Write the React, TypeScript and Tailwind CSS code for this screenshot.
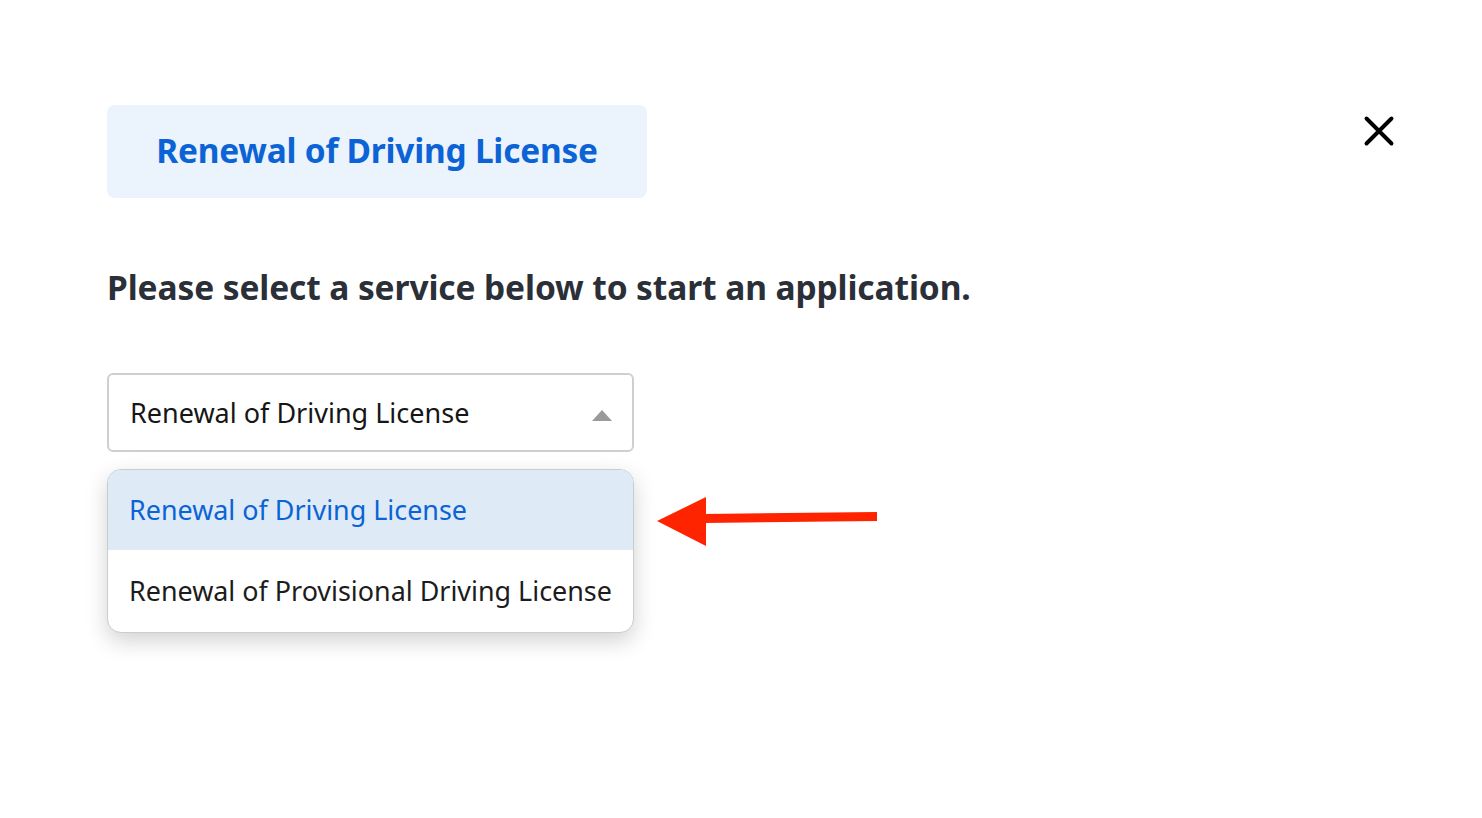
const font = { fontFamily: "'Noto Sans', Lato, 'Liberation Sans', sans-serif" };

export default function App() {
  return (
    <div className="relative min-h-[818px] w-full bg-white text-[#2b2f38]" style={font}>
      <div className="flex items-start justify-between pl-[107px] pr-[87px] pt-[105px]">
        <div className="flex h-[93px] w-[540px] items-center justify-center rounded-lg bg-[#ebf3fc] pb-[4px]">
          <h1 className="text-[33.4px] leading-[40px] font-bold tracking-[-0.2px] text-[#0b63d5]">
            Renewal of Driving License
          </h1>
        </div>
        <button className="mt-[10px] text-black" aria-label="Close">
          <svg width="32" height="32" viewBox="0 0 32 32" fill="none" stroke="currentColor" strokeWidth="3.9" strokeLinecap="round">
            <path d="M3.5 3.5L28.5 28.5M28.5 3.5L3.5 28.5" />
          </svg>
        </button>
      </div>

      <div className="pl-[107px]">
        <p className="mt-[69px] text-[33.5px] leading-[40px] font-bold tracking-[-0.1px] text-[#2b2f38]">
          Please select a service below to start an application.
        </p>

        <div className="mt-[66px] w-[527px]">
          <div className="flex h-[79px] items-center justify-between rounded-md border-2 border-[#cfcfcf] pl-[21px] pr-[20px]">
            <span className="text-[27px] leading-[36px] text-[#161616]">Renewal of Driving License</span>
            <span className="mt-[6px] h-0 w-0 border-x-[10px] border-b-[11px] border-x-transparent border-b-[#9a9a9a]" />
          </div>

          <div className="mt-[17px] overflow-hidden rounded-[14px] border border-[#cccccc] bg-white shadow-[0_8px_22px_rgba(0,0,0,0.18)]">
            <div className="flex h-[80px] items-center bg-[#deebf7] pl-[21px] text-[26.9px] leading-[36px] text-[#0b63d5]">
              Renewal of Driving License
            </div>
            <div className="flex h-[82px] items-center pl-[21px] text-[26.9px] leading-[36px] text-[#1c1c1c]">
              Renewal of Provisional Driving License
            </div>
          </div>
        </div>
      </div>

      <svg className="absolute left-[655px] top-[494px]" width="226" height="55" viewBox="0 0 226 55">
        <polygon points="2,27 51,3 51,52" fill="#ff2400" />
        <polygon points="49,20 222,18 222,27 49,29" fill="#ff2400" />
      </svg>
    </div>
  );
}
